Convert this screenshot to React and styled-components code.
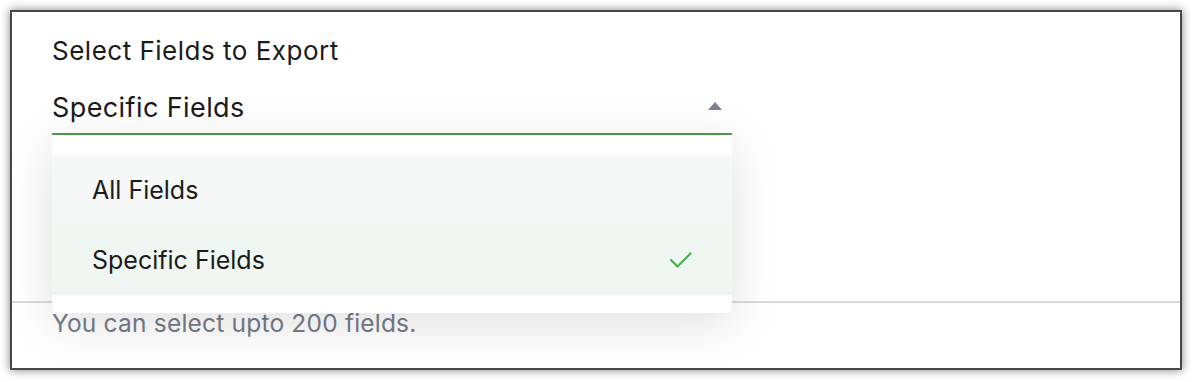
import React from 'react';
import styled, { createGlobalStyle } from 'styled-components';

const Global = createGlobalStyle`
    html, body {
        margin: 0;
        padding: 0;
        background: #ffffff;
    }
    body {
        font-family: Inter, "Noto Sans", sans-serif;
        color: #1b1b1b;
    }
`

const Page = styled.div`
    width: 1192px;
    height: 382px;
    padding: 10px;
    box-sizing: border-box;
`

const Frame = styled.div`
    width: 1172px;
    height: 360px;
    box-sizing: border-box;
    border: 2px solid #474747;
    box-shadow: 0 0 9px rgba(0, 0, 0, 0.5);
    background: #ffffff;
    display: flex;
    flex-direction: column;
`

const Content = styled.div`
    padding: 22px 40px 0 40px;
    display: flex;
    flex-direction: column;
`

const Title = styled.div`
    font-size: 26px;
    line-height: 34px;
    letter-spacing: 0.5px;
`

const SelectWrap = styled.div`
    position: relative;
    width: 680px;
    margin-top: 19px;
`

const SelectBox = styled.div`
    height: 48px;
    box-sizing: border-box;
    padding-bottom: 6px;
    display: flex;
    align-items: center;
    justify-content: space-between;
    border-bottom: 2px solid #4b9c4c;
    font-size: 27px;
    letter-spacing: 0.4px;
`

const Caret = styled.span`
    width: 0;
    height: 0;
    margin-right: 10px;
    margin-top: -3px;
    border-left: 7px solid transparent;
    border-right: 7px solid transparent;
    border-bottom: 8px solid #7b8090;
`

const Menu = styled.div`
    position: absolute;
    top: 48px;
    left: 0;
    right: 0;
    z-index: 2;
    background: #ffffff;
    padding: 20px 0 18px;
    border-radius: 0 0 6px 6px;
    box-shadow: 0 10px 50px rgba(0, 0, 0, 0.13);
`

const Option = styled.div`
    height: 70px;
    padding: 0 40px;
    display: flex;
    align-items: center;
    justify-content: space-between;
    font-size: 25px;
    background: ${p => (p.$selected ? '#f0f7f2' : '#f5f8f6')};
`

const Divider = styled.div`
    margin-top: 166px;
    height: 2px;
    background: #d7ddd8;
`

const Hint = styled.div`
    padding: 6px 40px 0;
    font-size: 24.5px;
    line-height: 28px;
    letter-spacing: 0.2px;
    color: #757b89;
`

const Check = () => (
    <svg width="24" height="16" viewBox="0 0 24 16" fill="none">
        <polyline points="3,8 9.5,14.5 22.5,1.5" stroke="#4cae50" strokeWidth="2.2" strokeLinecap="round" strokeLinejoin="round" />
    </svg>
)

const options = [
    { label: 'All Fields', selected: false },
    { label: 'Specific Fields', selected: true },
]

const App = () => {
    return (
        <Page>
            <Global />
            <Frame>
                <Content>
                    <Title>Select Fields to Export</Title>
                    <SelectWrap>
                        <SelectBox>
                            <span>Specific Fields</span>
                            <Caret />
                        </SelectBox>
                        <Menu>
                            {options.map(o => (
                                <Option key={o.label} $selected={o.selected}>
                                    <span>{o.label}</span>
                                    {o.selected && <Check />}
                                </Option>
                            ))}
                        </Menu>
                    </SelectWrap>
                </Content>
                <Divider />
                <Hint>You can select upto 200 fields.</Hint>
            </Frame>
        </Page>
    )
}

export default App
